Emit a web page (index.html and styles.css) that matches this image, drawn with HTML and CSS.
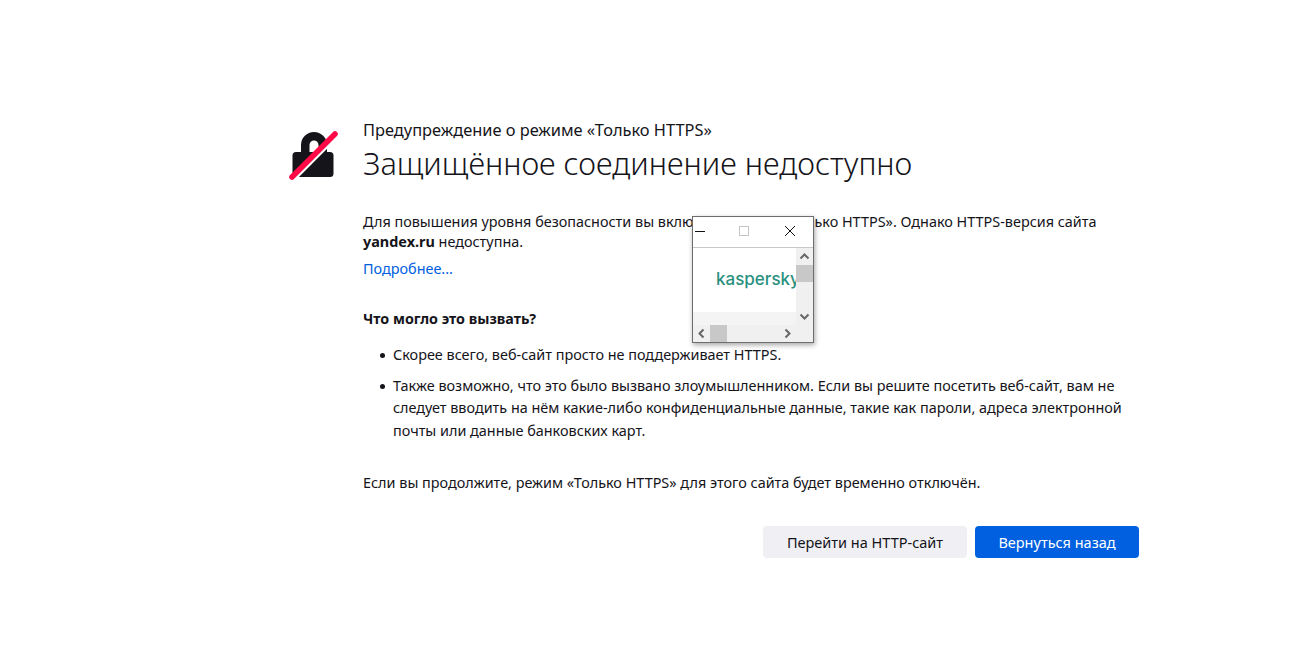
FILE: index.html
```html
<!DOCTYPE html>
<html lang="ru">
<head>
<meta charset="utf-8">
<title>Предупреждение о режиме «Только HTTPS»</title>
<link rel="stylesheet" href="styles.css">
</head>
<body>
<main class="page">
  <svg class="lock" width="52" height="56" viewBox="0 0 52 56" aria-hidden="true">
    <path class="lock-body" d="M15 24v-7a13 13 0 0 1 26 0v7h-8.500v-7a4.500 4.500 0 0 0-9 0v7z"/>
    <path class="lock-body" d="M10 24h34a3.500 3.500 0 0 1 3.500 3.500v18a3.500 3.500 0 0 1-3.500 3.500H10a3.500 3.500 0 0 1-3.500-3.500v-18A3.500 3.500 0 0 1 10 24z"/>
    <path class="lock-gap" d="M8 51L51 8"/>
    <path class="lock-slash" d="M6 49L49 6"/>
  </svg>
  <div class="content">
    <p class="eyebrow">Предупреждение о режиме «Только HTTPS»</p>
    <h1 class="title">Защищённое соединение недоступно</h1>
    <p class="intro">Для повышения уровня безопасности вы включили режим «Только HTTPS». Однако HTTPS-версия сайта <b>yandex.ru</b> недоступна.</p>
    <a class="more" href="#">Подробнее...</a>
    <h2 class="why">Что могло это вызвать?</h2>
    <ul class="reasons">
      <li>Скорее всего, веб-сайт просто не поддерживает HTTPS.</li>
      <li>Также возможно, что это было вызвано злоумышленником. Если вы решите посетить веб-сайт, вам не следует вводить на нём какие-либо конфиденциальные данные, такие как пароли, адреса электронной почты или данные банковских карт.</li>
    </ul>
    <p class="note">Если вы продолжите, режим «Только HTTPS» для этого сайта будет временно отключён.</p>
    <div class="actions">
      <button class="btn btn-secondary">Перейти на HTTP-сайт</button>
      <button class="btn btn-primary">Вернуться назад</button>
    </div>
  </div>
</main>
<aside class="popup">
  <div class="popup-bar">
    <span class="ctl-min"></span>
    <span class="ctl-max"></span>
    <svg class="ctl-close" width="12" height="12" viewBox="0 0 12 12" aria-hidden="true"><path d="M1 1l10 10M11 1L1 11"/></svg>
  </div>
  <div class="popup-body">
    <div class="popup-view">
      <div class="popup-canvas"><span class="brand">kaspersky</span></div>
    </div>
    <div class="vscroll">
      <svg class="arrow" width="11" height="8" viewBox="0 0 11 8" aria-hidden="true"><path d="M1.500 6.500l4-4 4 4"/></svg>
      <span class="vthumb"></span>
      <svg class="arrow arrow-end" width="11" height="8" viewBox="0 0 11 8" aria-hidden="true"><path d="M1.500 1.500l4 4 4-4"/></svg>
    </div>
    <div class="hscroll">
      <svg class="arrow" width="8" height="11" viewBox="0 0 8 11" aria-hidden="true"><path d="M6.500 1.500l-4 4 4 4"/></svg>
      <span class="hthumb"></span>
      <svg class="arrow arrow-right" width="8" height="11" viewBox="0 0 8 11" aria-hidden="true"><path d="M1.500 1.500l4 4-4 4"/></svg>
    </div>
  </div>
</aside>
</body>
</html>
```
FILE: styles.css
```css
* { box-sizing: border-box; }
html, body { margin: 0; height: 100%; background: #fff; overflow: hidden; }
body { font-family: "Noto Sans", "Open Sans", sans-serif; font-size: 14.420px; color: #15141a; }
.page { display: flex; width: 860px; margin-left: 286px; padding-top: 121px; }
.lock { flex: none; margin-top: 7px; }
.lock-body { fill: #15141a; }
.lock-gap { stroke: #fff; stroke-width: 4; fill: none; }
.lock-slash { stroke: #ff0a47; stroke-width: 5.500; stroke-linecap: round; fill: none; }
.content { margin-left: 25px; width: 777px; }
.eyebrow { margin: 0; font-size: 16.400px; line-height: 18px; }
.title { margin: 6px 0 0; font-size: 30.750px; line-height: 36px; font-weight: 300; }
.intro { margin: 31px 0 0; line-height: 19.500px; width: 740px; }
.more { display: block; margin-top: 6px; line-height: 23px; color: #0060df; text-decoration: none; }
.why { margin: 27px 0 0; font-size: 14.300px; line-height: 23px; font-weight: 700; }
.reasons { margin: 14px 0 0; padding: 0 0 0 30px; list-style: none; }
.reasons li { line-height: 22.500px; margin-bottom: 8px; width: 740px; }
.reasons li::before { content: ""; display: inline-block; width: 5px; height: 5px; margin: 0 8px 0 -13px; border-radius: 50%; background: #15141a; vertical-align: 2px; }
.note { margin: 29px 0 0; line-height: 23px; }
.actions { display: flex; justify-content: flex-end; gap: 8px; margin-top: 32px; padding-right: 1px; }
.btn { height: 32px; border: 0; border-radius: 4px; font: 400 14.500px "Noto Sans", sans-serif; padding: 0; }
.btn-secondary { background: #f0f0f4; color: #15141a; width: 204px; }
.btn-primary { background: #0060df; color: #fff; width: 164px; }
.popup { position: absolute; left: 692px; top: 216px; width: 122px; height: 127px; background: #fff; border: 1px solid #6d6d6d; box-shadow: 1px 2px 5px rgba(0,0,0,.35); display: flex; flex-direction: column; }
.popup-bar { height: 31px; flex: none; position: relative; border-bottom: 1px solid #c8c8c8; }
.ctl-min { position: absolute; left: 2px; top: 14px; width: 10px; height: 1px; background: #111; }
.ctl-max { position: absolute; left: 46px; top: 9px; width: 10px; height: 10px; border: 1px solid #c4c4c4; }
.ctl-close { position: absolute; left: 91px; top: 8px; }
.ctl-close path { stroke: #111; stroke-width: 1; fill: none; }
.popup-body { flex: 1; display: grid; grid-template-columns: 103px 17px; grid-template-rows: 77px 17px; }
.popup-view { overflow: hidden; background: #f4f4f4; }
.popup-canvas { height: 64px; background: #fff; overflow: hidden; padding: 19px 0 0 23px; }
.brand { display: block; width: 200px; font: 500 17px/24px "Inter", sans-serif; color: #2a9080; }
.vscroll { background: #f0f0f0; display: flex; flex-direction: column; align-items: center; padding-top: 4px; }
.vthumb { align-self: stretch; height: 17px; margin-top: 5px; background: #c8c8c8; }
.arrow { flex: none; }
.arrow path { stroke: #666; stroke-width: 2; fill: none; }
.arrow-end { margin-top: auto; margin-bottom: 4px; }
.hscroll { grid-column: 1 / 3; background: #f0f0f0; display: flex; align-items: center; padding: 0 6px 0 4px; }
.hthumb { width: 17px; align-self: stretch; margin-left: 5px; background: #c8c8c8; }
.arrow-right { margin-left: auto; margin-right: 15px; }
```
